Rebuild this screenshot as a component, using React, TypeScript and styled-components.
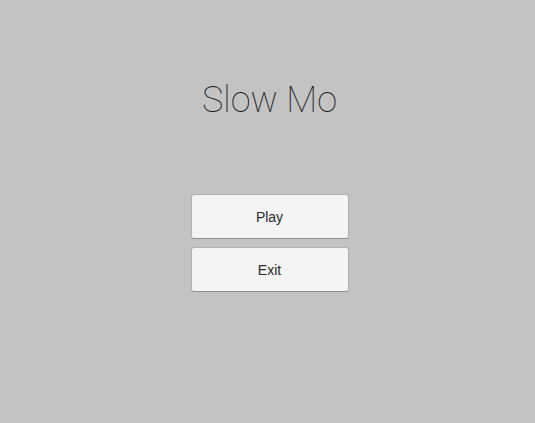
import styled, { createGlobalStyle } from "styled-components";

const GlobalStyle = createGlobalStyle`
  html, body {
    margin: 0;
    padding: 0;
    background: #c3c3c3;
  }
`;

const Screen = styled.div`
  width: 535px;
  height: 423px;
  background: #c3c3c3;
  display: flex;
  flex-direction: column;
  align-items: center;
  padding: 79px 0 0 4px;
  box-sizing: border-box;
`;

const Title = styled.h1`
  margin: 0;
  font-family: Roboto, "Liberation Sans", sans-serif;
  font-weight: 100;
  font-size: 36px;
  line-height: 43px;
  color: #1e1e1e;
  -webkit-font-smoothing: antialiased;
`;

const Menu = styled.div`
  margin-top: 72px;
  display: flex;
  flex-direction: column;
  gap: 8px;
`;

const MenuButton = styled.button`
  width: 158px;
  height: 45px;
  background: #f4f4f4;
  border: 1px solid #b0b0b0;
  border-bottom-color: #8e8e8e;
  border-radius: 3px;
  font-family: "Liberation Sans", Arial, sans-serif;
  font-size: 14px;
  color: #2a2a2a;
  padding: 0;
  cursor: pointer;
`;

export default function App() {
  return (
    <Screen>
      <GlobalStyle />
      <Title>Slow Mo</Title>
      <Menu>
        <MenuButton>Play</MenuButton>
        <MenuButton>Exit</MenuButton>
      </Menu>
    </Screen>
  );
}
